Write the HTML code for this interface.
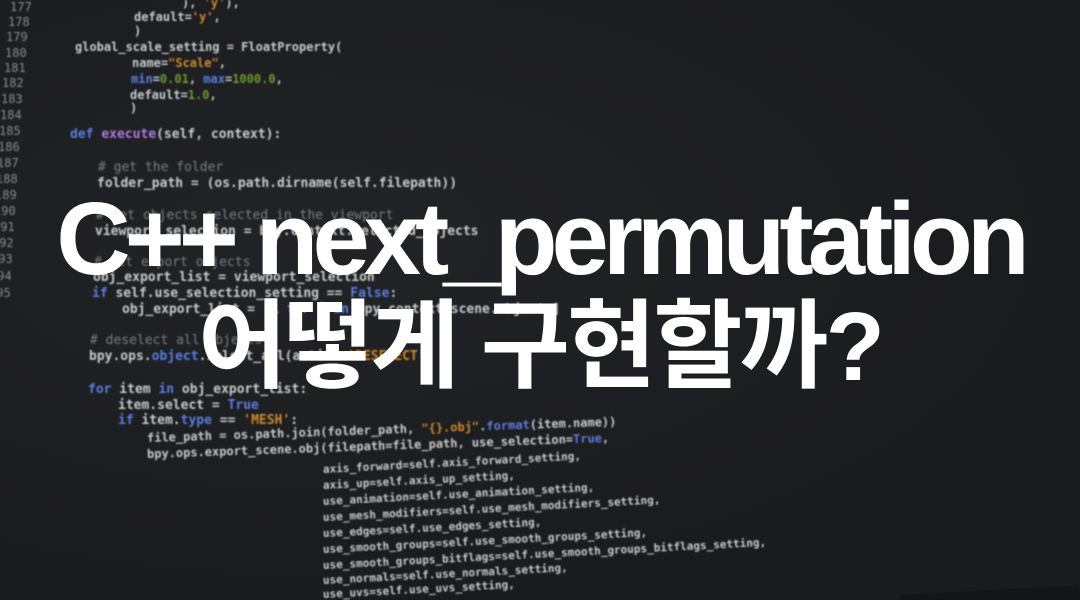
<!DOCTYPE html>
<html><head><meta charset="utf-8"><style>
html,body{margin:0;padding:0;width:1080px;height:600px;overflow:hidden;background:#1b1c1f}
#w{position:relative;width:1080px;height:600px;overflow:hidden}
.bg{position:absolute;inset:0;background:radial-gradient(ellipse at 30% 40%,#222326 0%,#1a1b1e 70%)}
.code{position:absolute;left:0;top:0;width:1080px;height:600px;overflow:hidden;font-family:"DejaVu Sans Mono","Liberation Mono",monospace;color:#c9cbcf;font-weight:bold;white-space:pre;filter:blur(0.9px)}
.code div{position:absolute;white-space:pre}
.ln{color:#8a8c90;font-weight:normal}
.k{color:#5a7fe0}.s{color:#d08a2a}.n{color:#6e9a2a}.f{color:#b07be0}.c{color:#7a7d82;font-weight:normal}
.t{position:absolute;left:0;width:1080px;text-align:center;color:#fff;font-family:"Liberation Sans","Noto Sans CJK KR",sans-serif;font-weight:bold;white-space:nowrap}
</style></head><body><div id="w">
<div class="bg"></div>
<div class="code" style="font-size:12px">
<div class="ln" style="left:10px;top:0px">177</div>
<div class="ln" style="left:8px;top:15px">178</div>
<div class="ln" style="left:6px;top:30px">179</div>
<div class="ln" style="left:5px;top:46px">180</div>
<div class="ln" style="left:4px;top:61px">181</div>
<div class="ln" style="left:2px;top:76px">182</div>
<div class="ln" style="left:1px;top:92px">183</div>
<div class="ln" style="left:0px;top:108px">184</div>
<div class="ln" style="left:-1px;top:124px">185</div>
<div class="ln" style="left:-2px;top:140px">186</div>
<div class="ln" style="left:-3px;top:156px">187</div>
<div class="ln" style="left:-4px;top:172px">188</div>
<div class="ln" style="left:-5px;top:188px">189</div>
<div class="ln" style="left:-6px;top:204px">190</div>
<div class="ln" style="left:-7px;top:220px">191</div>
<div class="ln" style="left:-8px;top:236px">192</div>
<div class="ln" style="left:-9px;top:252px">193</div>
<div class="ln" style="left:-10px;top:269px">194</div>
<div class="ln" style="left:-11px;top:286px">195</div>
<div style="left:182px;top:-4px">), <span class="s">'y'</span>),</div>
<div style="left:134px;top:10px">default=<span class="s">'y'</span>,</div>
<div style="left:134px;top:24px">)</div>
<div style="left:75px;top:40px">global_scale_setting = FloatProperty(</div>
<div style="left:132px;top:56px">name=<span class="s">"Scale"</span>,</div>
<div style="left:131px;top:72px"><span class="k">min</span>=<span class="n">0.01</span>, <span class="k">max</span>=<span class="n">1000.0</span>,</div>
<div style="left:130px;top:88px">default=<span class="n">1.0</span>,</div>
<div style="left:130px;top:101px">)</div>
<div style="left:70px;top:127px;font-size:13px"><span class="k">def</span> <span class="f">execute</span>(self, context):</div>
<div class="c" style="left:98px;top:160px;font-size:13px"># get the folder</div>
<div style="left:97px;top:176px;font-size:13px">folder_path = (os.path.dirname(self.filepath))</div>
<div class="c" style="left:96px;top:208px;font-size:13px"># get objects selected in the viewport</div>
<div style="left:95px;top:224px;font-size:13px">viewport_selection = bpy.context.selected_objects</div>
<div class="c" style="left:94px;top:255px;font-size:13px"># get export objects</div>
<div style="left:93px;top:270px;font-size:13px">obj_export_list = viewport_selection</div>
<div style="left:92px;top:286px;font-size:13px"><span class="k">if</span> self.use_selection_setting == <span class="k">False</span>:</div>
<div style="left:122px;top:302px;font-size:13px">obj_export_list = [i <span class="k">for</span> i <span class="k">in</span> bpy.context.scene.objects]</div>
<div class="c" style="left:90px;top:333px;font-size:13px"># deselect all objects</div>
<div style="left:89px;top:349px;font-size:13px">bpy.ops.<span class="k">object</span>.select_all(action=<span class="s">'DESELECT'</span>)</div>
<div style="left:88px;top:382px;font-size:13px"><span class="k">for</span> item <span class="k">in</span> obj_export_list:</div>
<div style="left:118px;top:398px;font-size:13px">item.select = <span class="k">True</span></div>
<div style="left:118px;top:413px;font-size:13px"><span class="k">if</span> item.<span class="k">type</span> == <span class="s">'MESH'</span>:</div>
<div style="left:147px;top:431px;font-size:12px;transform:rotate(-2deg);transform-origin:left">file_path = os.path.join(folder_path, <span class="s">"{}.obj"</span>.<span class="k">format</span>(item.name))</div>
<div style="left:147px;top:447px;font-size:12px;transform:rotate(-2deg);transform-origin:left">bpy.ops.export_scene.obj(filepath=file_path, use_selection=<span class="k">True</span>,</div>
<div style="left:323px;top:463px;font-size:11px;transform:rotate(-3deg);transform-origin:left">axis_forward=self.axis_forward_setting,</div>
<div style="left:323px;top:479px;font-size:11px;transform:rotate(-3deg);transform-origin:left">axis_up=self.axis_up_setting,</div>
<div style="left:323px;top:495px;font-size:11px;transform:rotate(-3deg);transform-origin:left">use_animation=self.use_animation_setting,</div>
<div style="left:323px;top:511px;font-size:11px;transform:rotate(-3deg);transform-origin:left">use_mesh_modifiers=self.use_mesh_modifiers_setting,</div>
<div style="left:323px;top:527px;font-size:11px;transform:rotate(-3deg);transform-origin:left">use_edges=self.use_edges_setting,</div>
<div style="left:323px;top:543px;font-size:11px;transform:rotate(-3deg);transform-origin:left">use_smooth_groups=self.use_smooth_groups_setting,</div>
<div style="left:323px;top:559px;font-size:11px;transform:rotate(-3deg);transform-origin:left">use_smooth_groups_bitflags=self.use_smooth_groups_bitflags_setting,</div>
<div style="left:323px;top:574px;font-size:11px;transform:rotate(-3deg);transform-origin:left">use_normals=self.use_normals_setting,</div>
<div style="left:323px;top:588px;font-size:11px;transform:rotate(-3deg);transform-origin:left">use_uvs=self.use_uvs_setting,</div>
</div>
<div style="position:absolute;left:900px;top:590px;width:180px;height:20px;background:#141517;transform:rotate(-3deg)"></div>
<div class="t" style="top:183px;font-size:103px;letter-spacing:-6px;line-height:112px">C++ next_permutation</div>
<div class="t" style="top:292px;font-size:97px;letter-spacing:-3px;line-height:110px">어떻게 구현할까?</div>
</div></body></html>
